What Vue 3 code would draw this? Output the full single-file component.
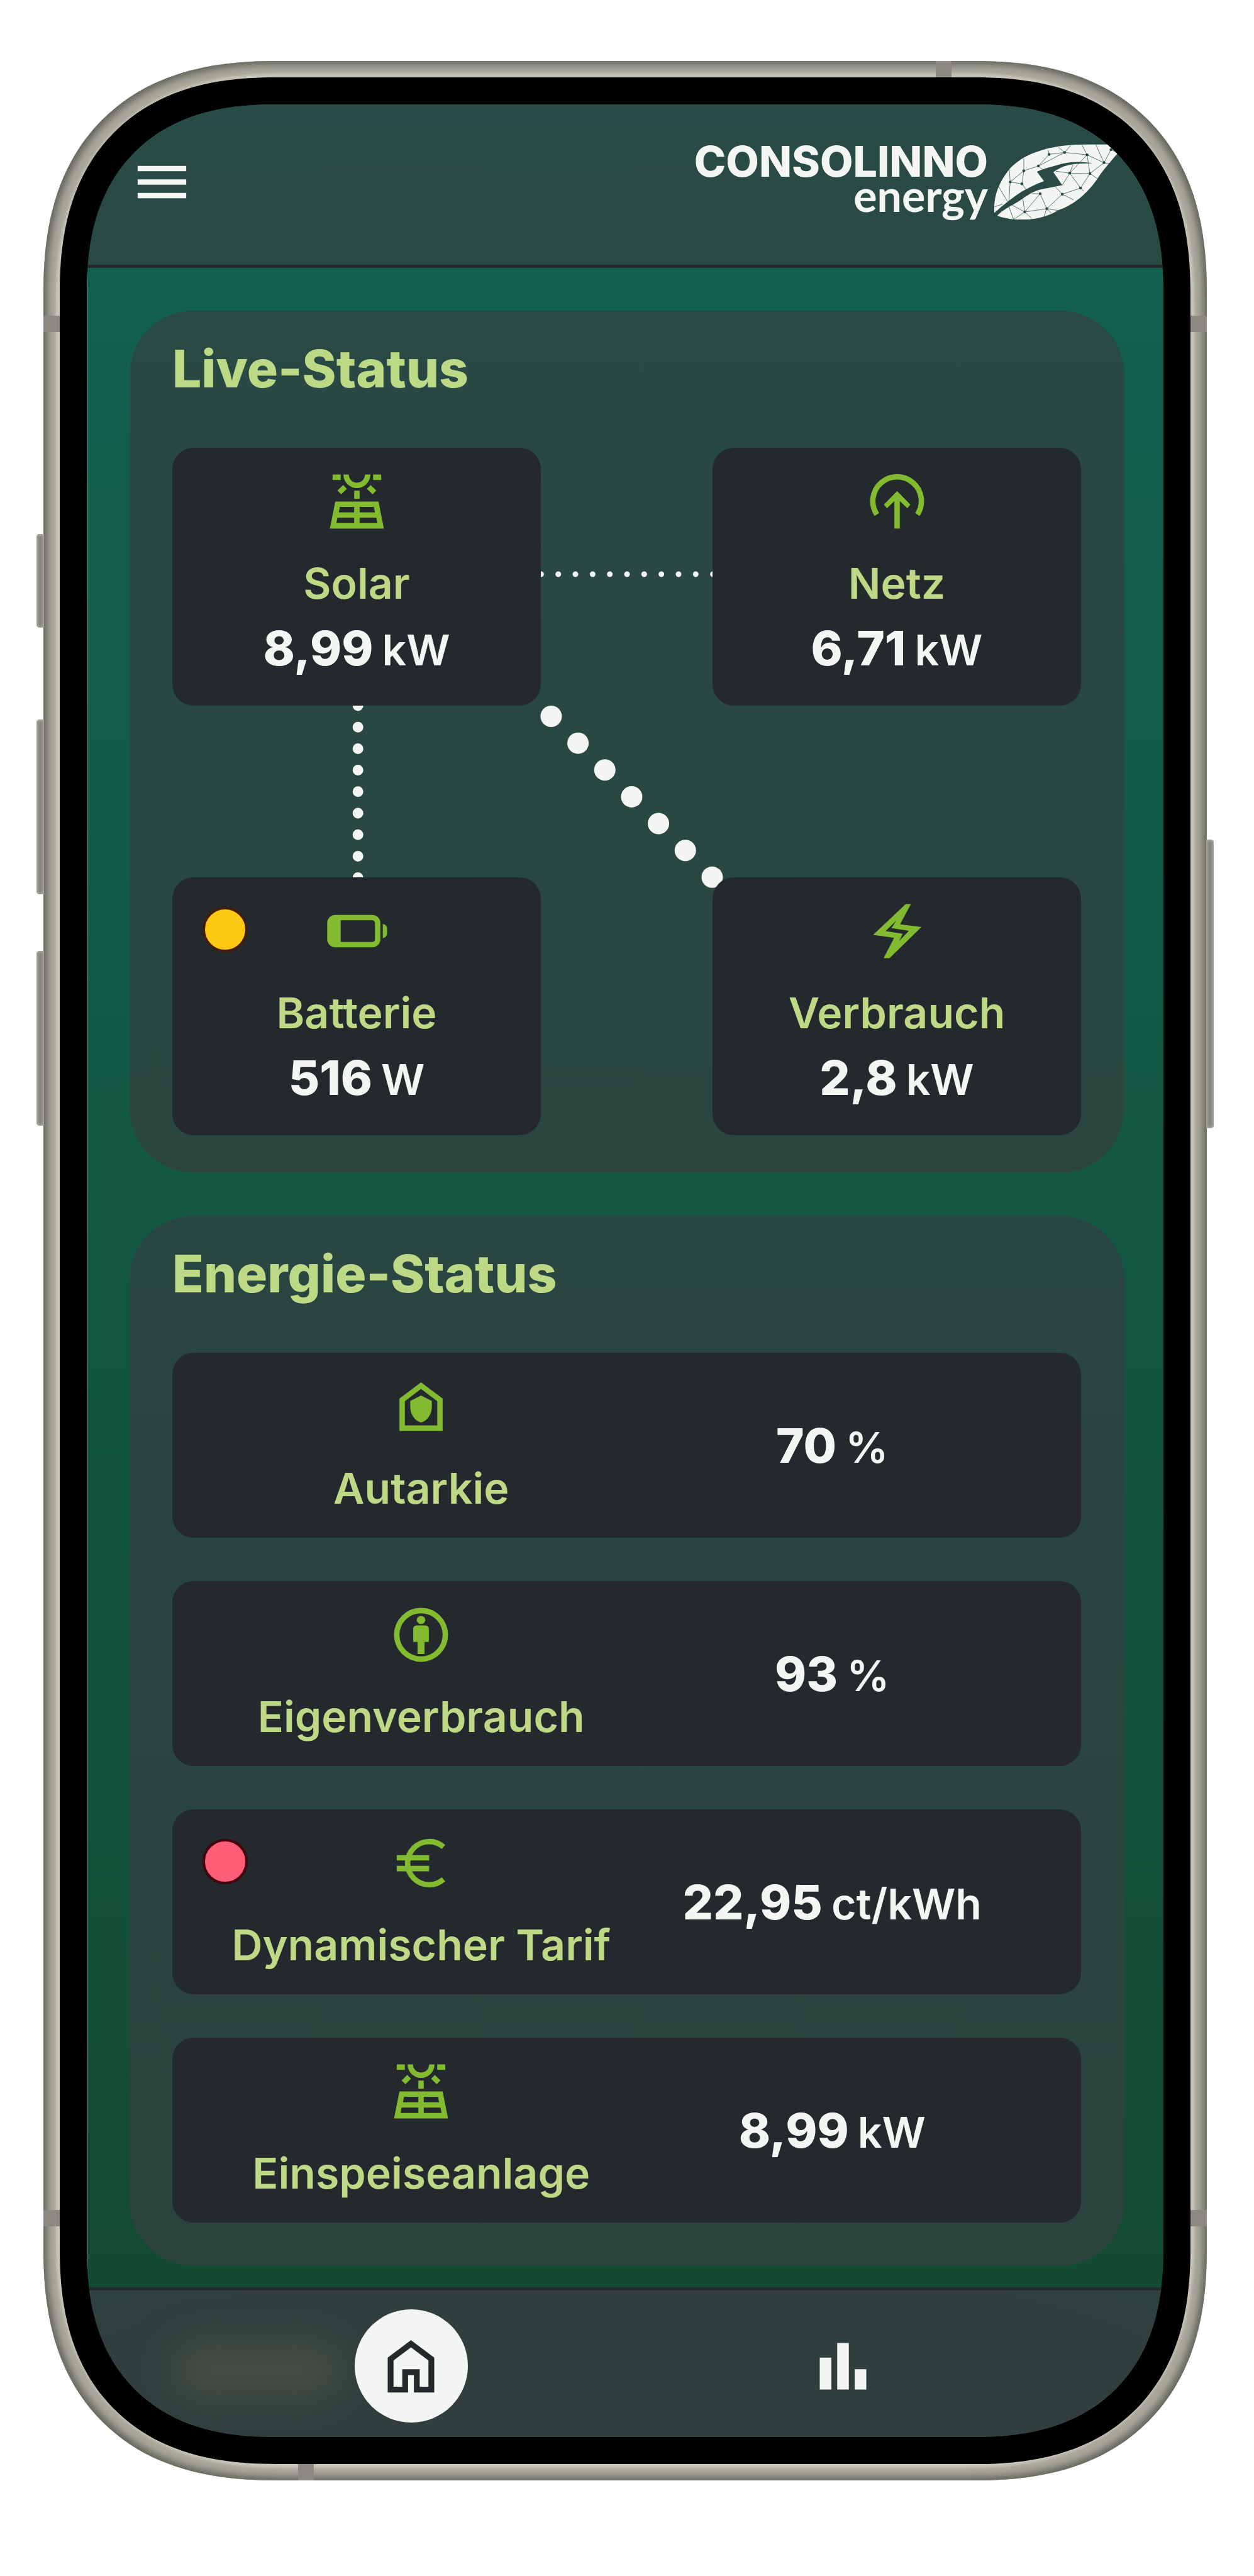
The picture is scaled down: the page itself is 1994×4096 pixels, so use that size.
<template>
  <div class="page">
    <div class="phone">
      <!-- Hardware details -->
      <span class="side-button side-button-left action-button"></span>
      <span class="side-button side-button-left volume-up"></span>
      <span class="side-button side-button-left volume-down"></span>
      <span class="side-button side-button-right power-button"></span>
      <span class="antenna antenna-side antenna-top"></span>
      <span class="antenna antenna-side antenna-bottom"></span>
      <span class="antenna antenna-upper"></span>
      <span class="antenna antenna-lower"></span>

      <div class="bezel">
        <div class="screen">
          <header class="app-header">
            <button class="menu-button" type="button" aria-label="Menü">
              <svg class="icon" viewBox="0 0 24 24" aria-hidden="true">
                <path d="M3 6h18v2H3zM3 11h18v2H3zM3 16h18v2H3z" />
              </svg>
            </button>
            <div class="brand">
              <div class="brand-text">
                <span class="brand-name">CONSOLINNO</span>
                <span class="brand-sub">energy</span>
              </div>
              <svg class="brand-leaf" viewBox="0 0 279 161" aria-hidden="true">
                <path
                  class="leaf-shape"
                  d="M2 147C0 110 12 82 34 54C58 26 110 1 195 1L279 1C272 16 240 45 222 74C196 112 165 132 139 141C105 163 50 168 8 153C20 140 36 133 56 121C72 110 84 101 101 97L147 88L128 60C140 52 152 46 165 44C182 41 197 42 212 41C180 36 158 38 133 46C118 50 104 54 93 59L108 79C92 85 82 90 69 97C48 108 24 128 2 147Z"
                />
                <path
                  class="leaf-lines"
                  d="M117 13L119 22L152 18L200 23L236 40L251 12L256 1M251 12L268 20M119 22L96 47L65 57L36 81L61 85L65 57L65 31M152 18L96 47L105 54M139 7L152 18L165 3M189 2L200 23L206 63L163 62L133 58M200 23L163 62L147 88M219 2L236 40L206 63L222 74M236 40L249 42M206 63L186 94L163 62L170 44M193 101L186 94L147 107L132 91M171 119L147 107L114 138L100 106L67 145L114 138L139 142M67 145L36 128M43 161L67 145L82 159M43 161L33 132M67 145L63 117M114 138L108 155M114 138L124 148M100 106L82 106M36 81L34 54M36 81L33 124M61 85L70 97M11 90L31 124M3 134L20 128"
                />
                <g class="leaf-nodes">
                  <circle
                    v-for="(node, index) in leafNodes"
                    :key="index"
                    :cx="node[0]"
                    :cy="node[1]"
                    r="3"
                  />
                </g>
              </svg>
            </div>
          </header>

          <main class="app-content">
            <section class="card live-card">
              <h2 class="card-title">Live-Status</h2>
              <div class="live-grid">
                <svg
                  class="flows"
                  viewBox="0 0 1444 1093"
                  preserveAspectRatio="none"
                  aria-hidden="true"
                >
                  <path class="flow flow-grid" d="M586 201H860" />
                  <path class="flow flow-battery" d="M295 410V684" />
                  <path class="flow flow-usage" d="M602 427L858 683" />
                </svg>
                <article v-for="tile in liveTiles" :key="tile.label" class="tile live-tile">
                  <span v-if="tile.status" class="status-dot" :class="tile.status"></span>
                  <svg class="icon" viewBox="0 0 24 24" aria-hidden="true">
                    <path v-if="icons[tile.icon].fill" :d="icons[tile.icon].fill" />
                    <path
                      v-if="icons[tile.icon].stroke"
                      class="icon-stroke"
                      :d="icons[tile.icon].stroke"
                    />
                  </svg>
                  <span class="tile-label">{{ tile.label }}</span>
                  <span class="tile-value">
                    <strong>{{ tile.value }}</strong>
                    <span>{{ tile.unit }}</span>
                  </span>
                </article>
              </div>
            </section>

            <section class="card energy-card">
              <h2 class="card-title">Energie-Status</h2>
              <div class="energy-list">
                <article v-for="row in energyRows" :key="row.label" class="tile energy-row">
                  <span v-if="row.status" class="status-dot" :class="row.status"></span>
                  <div class="energy-name">
                    <svg class="icon" viewBox="0 0 24 24" aria-hidden="true">
                      <path v-if="icons[row.icon].fill" :d="icons[row.icon].fill" />
                      <path
                        v-if="icons[row.icon].stroke"
                        class="icon-stroke"
                        :d="icons[row.icon].stroke"
                      />
                    </svg>
                    <span class="tile-label">{{ row.label }}</span>
                  </div>
                  <span class="tile-value">
                    <strong>{{ row.value }}</strong>
                    <span>{{ row.unit }}</span>
                  </span>
                </article>
              </div>
            </section>
          </main>

          <nav class="app-nav">
            <button
              v-for="item in navItems"
              :key="item.icon"
              class="nav-button"
              :class="{ active: activeNav === item.icon }"
              type="button"
              :aria-label="item.label"
              @click="activeNav = item.icon"
            >
              <svg class="icon" viewBox="0 0 24 24" aria-hidden="true">
                <path :d="icons[item.icon].fill" />
              </svg>
            </button>
          </nav>
        </div>
      </div>
    </div>
  </div>
</template>

<script setup>
import { ref } from 'vue';

// 24x24 icons, filled parts and 2 unit wide strokes
const icons = {
  solar: {
    fill: 'M3 2h3v2H3zM18 2h3v2h-3zM7 2a5 5 0 0 0 10 0h-2a3 3 0 0 1-6 0zM11 8h2v3h-2zM6.9 5.9L8.3 7.3 6.2 9.3 4.8 7.9zM17.1 5.9L15.7 7.3 17.8 9.3 19.2 7.9zM4 12h16l2 10H2zM5.7 14L5.3 16H11V14zM13 14v2h5.7L18.3 14zM4.8 18L4.4 20H11V18zM13 18v2h6.6L19.2 18z'
  },
  grid: {
    fill: 'M11 22V11.8L8.2 14.5 7.1 13.1 12 8.1 16.9 13.1 15.8 14.5 13 11.8V22z',
    stroke: 'M4.5 16.8A9 9 0 1 1 19.5 16.8'
  },
  battery: {
    fill: 'M4 6H17.7a3 3 0 0 1 3 3v6a3 3 0 0 1-3 3H4a3 3 0 0 1-3-3V9a3 3 0 0 1 3-3zM6 8v8H17.7a1 1 0 0 0 1-1V9a1 1 0 0 0-1-1zM21.6 9.4a1.7 1.7 0 0 1 1.6 1.6v2a1.7 1.7 0 0 1-1.6 1.6z'
  },
  usage: {
    fill: 'M15.2 2H17.1L13.1 9.5 21 10.5 9.2 22H7L10.9 14.5 3.1 13.4zM11.7 8.1L7.7 12 14.1 13 12.8 15.6 16.4 11.9 9.9 10.9z'
  },
  autarky: {
    fill: 'M4 21V9L12 3 20 9V21zM6 19H18V10L12 5.5 6 10zM12 7.9L16 9.9V12C16 14.8 14.4 17.3 12 17.9 9.6 17.3 8 14.8 8 12V9.9z'
  },
  person: {
    fill: 'M10.4 6.5a1.6 1.5 0 1 1 3.2 0a1.6 1.5 0 1 1-3.2 0zM10.3 8.5H13.7A1.2 1.2 0 0 1 14.9 9.7V14.6H13.3V19.1H10.7V14.6H9.1V9.7A1.2 1.2 0 0 1 10.3 8.5z',
    stroke: 'M12 3A9 9 0 1 1 12 21A9 9 0 1 1 12 3z'
  },
  euro: {
    fill: 'M3 9H15V11H3zM3 13H15V15H3z',
    stroke: 'M20.3 6A8 8 0 1 0 20.3 18'
  },
  home: {
    fill: 'M4 21V9L12 3 20 9V21H13V15H11V21zM6 19H9V13H15V19H18V10L12 5.5 6 10z'
  },
  chart: {
    fill: 'M4 9H8V20H4zM10 4H14V20H10zM16 13H20V20H16z'
  }
};

const leafNodes = [
  [119, 22], [152, 18], [200, 23], [251, 12], [236, 40], [206, 63],
  [163, 62], [96, 47], [65, 57], [36, 81], [61, 85], [100, 106],
  [147, 107], [186, 94], [114, 138], [67, 145]
];

const liveTiles = [
  { label: 'Solar', value: '8,99', unit: 'kW', icon: 'solar' },
  { label: 'Netz', value: '6,71', unit: 'kW', icon: 'grid' },
  { label: 'Batterie', value: '516', unit: 'W', icon: 'battery', status: 'warning' },
  { label: 'Verbrauch', value: '2,8', unit: 'kW', icon: 'usage' }
];

const energyRows = [
  { label: 'Autarkie', value: '70', unit: '%', icon: 'autarky' },
  { label: 'Eigenverbrauch', value: '93', unit: '%', icon: 'person' },
  { label: 'Dynamischer Tarif', value: '22,95', unit: 'ct/kWh', icon: 'euro', status: 'danger' },
  { label: 'Einspeiseanlage', value: '8,99', unit: 'kW', icon: 'solar' }
];

const navItems = [
  { icon: 'home', label: 'Übersicht' },
  { icon: 'chart', label: 'Auswertung' }
];

const activeNav = ref('home');
</script>

<style>
body {
  background: #fff;
}
</style>

<style scoped>
.page {
  padding: 97px 75px 152px 69px;
  font-family: Inter, "Noto Sans", sans-serif;
  color: #f4f6f3;
}

.page * {
  box-sizing: border-box;
}

/* Phone body */
.phone {
  position: relative;
  padding: 26px;
  border-radius: 336px;
  background: #c9c7ba;
  box-shadow: inset 0 0 12px 6px #66655c, inset 0 0 4px 20px #a9a89b;
}

.bezel {
  position: relative;
  padding: 43px;
  border-radius: 312px;
  background: #000;
}

.screen {
  position: relative;
  display: flex;
  flex-direction: column;
  overflow: hidden;
  border-radius: 266px;
  background: linear-gradient(#126150, #125843 45%, #134930);
}

/* Continuous corners where the browser can draw them */
@supports (corner-shape: superellipse(1.2)) {
  .phone {
    border-radius: 370px;
    corner-shape: superellipse(1.25);
  }

  .bezel {
    border-radius: 344px;
    corner-shape: superellipse(1.25);
  }

  .screen {
    border-radius: 301px;
    corner-shape: superellipse(1.25);
  }
}

.side-button {
  position: absolute;
  width: 12px;
  background: #85847a;
  box-shadow: inset 0 0 4px 2px #aeac9f;
}

.side-button-left {
  left: -11px;
  border-radius: 5px 0 0 5px;
}

.side-button-right {
  right: -11px;
  border-radius: 0 5px 5px 0;
}

.action-button {
  top: 752px;
  height: 149px;
}

.volume-up {
  top: 1047px;
  height: 278px;
}

.volume-down {
  top: 1415px;
  height: 278px;
}

.power-button {
  top: 1238px;
  height: 459px;
}

.antenna {
  position: absolute;
  background: #8c8983;
}

.antenna-side {
  left: 0;
  right: 0;
  height: 26px;
}

.antenna-top {
  top: 405px;
}

.antenna-bottom {
  bottom: 404px;
}

.antenna-upper {
  top: 0;
  right: 406px;
  width: 25px;
  height: 26px;
}

.antenna-lower {
  bottom: 0;
  left: 405px;
  width: 25px;
  height: 26px;
}

/* Header */
.app-header {
  display: flex;
  align-items: center;
  justify-content: space-between;
  padding: 63px 62px 72px 68px;
  border-bottom: 5px solid #24292c;
  background: linear-gradient(#294b47, #294943);
}

.menu-button {
  display: flex;
  padding: 0;
  border: 0;
  background: none;
  color: #f4f6f3;
}

.icon {
  display: block;
  width: 103px;
  height: 103px;
  fill: currentColor;
  fill-rule: evenodd;
}

.icon-stroke {
  fill: none;
  stroke: currentColor;
  stroke-width: 2;
}

.brand {
  display: flex;
  align-items: flex-start;
  gap: 8px;
}

.brand-text {
  display: flex;
  flex-direction: column;
  align-items: flex-end;
}

.brand-name {
  font-size: 68px;
  font-weight: 800;
  line-height: 54px;
}

.brand-sub {
  font-family: Lato, sans-serif;
  font-size: 70px;
  font-weight: 700;
  line-height: 54px;
}

.brand-leaf {
  width: 209px;
  height: 120px;
}

.leaf-shape {
  fill: #f4f6f3;
}

.leaf-lines {
  fill: none;
  stroke: #294a45;
  stroke-width: 1;
}

.leaf-nodes {
  fill: #294a45;
}

/* Cards */
.app-content {
  display: flex;
  flex-direction: column;
  gap: 68px;
  padding: 68px 62px 34px 67px;
  border-left: 1px solid #8f918e;
}

.card {
  padding: 34px 69px 69px 68px;
  border-radius: 102px;
  background: linear-gradient(#294944, #2a463f);
}

.live-card {
  padding-bottom: 60px;
}

.energy-card {
  background: linear-gradient(#2a4641, #2b433d);
}

.card-title {
  margin: 0 0 66px;
  color: #bdd986;
  font-size: 82px;
  font-weight: 800;
  line-height: 118px;
}

.tile {
  position: relative;
  border-radius: 34px;
  background: #23292c;
  color: #83bb30;
}

.live-grid {
  position: relative;
  display: grid;
  grid-template-columns: 1fr 1fr;
  gap: 273px;
}

.live-tile {
  display: flex;
  flex-direction: column;
  align-items: center;
  padding: 34px;
}

.tile-label {
  margin-top: 35px;
  color: #bdd986;
  font-size: 68px;
  font-weight: 600;
  line-height: 86px;
  white-space: nowrap;
}

.tile-value {
  display: flex;
  align-items: baseline;
  gap: 14px;
  padding-top: 8px;
  color: #f4f6f3;
  font-size: 68px;
  font-weight: 600;
  line-height: 110px;
  white-space: nowrap;
}

.tile-value strong {
  font-size: 76px;
  font-weight: 800;
  line-height: 1;
}

.status-dot {
  position: absolute;
  top: 47px;
  left: 48px;
  width: 72px;
  height: 72px;
  border: 4px solid;
  border-radius: 50%;
}

.status-dot.warning {
  border-color: #441c04;
  background: #fdc813;
}

.status-dot.danger {
  border-color: #43000c;
  background: #ff5e78;
}

/* Energy flow between the tiles */
.flows {
  position: absolute;
  inset: 0;
  width: 100%;
  height: 100%;
}

.flow {
  fill: none;
  stroke: #f4f6f3;
  stroke-linecap: round;
}

.flow-grid {
  stroke-width: 9;
  stroke-dasharray: 0 27.3;
}

.flow-battery {
  stroke-width: 17;
  stroke-dasharray: 0 34.2;
}

.flow-usage {
  stroke-width: 34;
  stroke-dasharray: 0 60.3;
}

/* Energy list */
.energy-list {
  display: flex;
  flex-direction: column;
  gap: 69px;
}

.energy-row {
  display: grid;
  grid-template-columns: 1fr 1fr;
  align-items: center;
  justify-items: center;
  padding: 34px 69px 36px;
}

.energy-name {
  display: flex;
  flex-direction: column;
  align-items: center;
}

/* Bottom navigation */
.app-nav {
  position: relative;
  display: grid;
  grid-template-columns: 1fr 1fr;
  justify-items: center;
  padding: 30px 166px 23px 172px;
  border-top: 5px solid #24292c;
  background:
    radial-gradient(ellipse 88% 150% at 50% 70%, #303f3e 60%, #29463d 100%);
}

/* Card title shimmering through the bar */
.app-nav::before {
  content: "";
  position: absolute;
  top: 86px;
  left: 136px;
  width: 270px;
  height: 80px;
  border-radius: 40px;
  background: #455144;
  filter: blur(30px);
}

.nav-button {
  position: relative;
  display: flex;
  align-items: center;
  justify-content: center;
  width: 180px;
  height: 180px;
  padding: 0;
  border: 0;
  border-radius: 50%;
  background: none;
  color: #f4f6f3;
}

.nav-button .icon {
  width: 111px;
  height: 111px;
}

.nav-button.active {
  background: #f4f6f3;
  color: #24292c;
}
</style>
